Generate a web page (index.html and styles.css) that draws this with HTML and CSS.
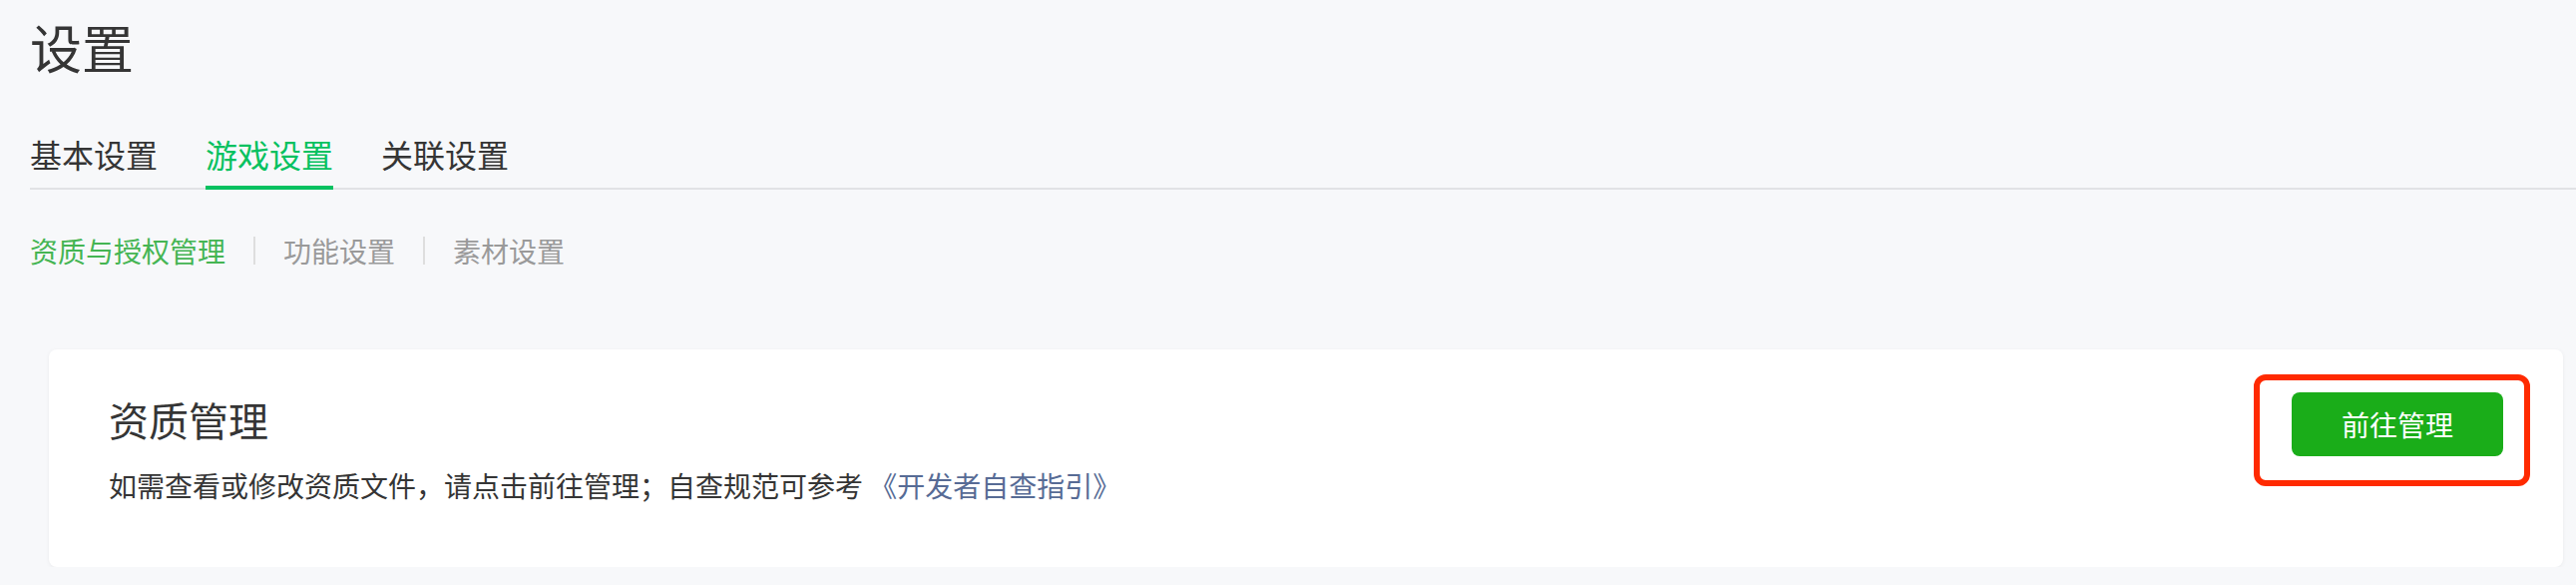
FILE: index.html
```html
<!DOCTYPE html>
<html lang="zh-CN">
<head>
	<meta charset="UTF-8" />
	<meta name="viewport" content="width=device-width, initial-scale=1.0" />
	<title>设置</title>
	<link rel="stylesheet" href="styles.css">
</head>
<body>
	<div class="page">
		<h1 class="page-title">设置</h1>

		<ul class="tabs">
			<li class="tab">基本设置</li>
			<li class="tab tab-on">游戏设置</li>
			<li class="tab">关联设置</li>
		</ul>

		<ul class="sub-nav">
			<li class="sub-item sub-on">资质与授权管理</li>
			<li class="sub-item">功能设置</li>
			<li class="sub-item">素材设置</li>
		</ul>

		<div class="card">
			<div class="card-info">
				<h2 class="card-title">资质管理</h2>
				<p class="card-desc">如需查看或修改资质文件，请点击前往管理；自查规范可参考 <a href="#" class="link">《开发者自查指引》</a></p>
			</div>
			<div class="action">
				<button type="button" class="bt-main">前往管理</button>
				<span class="mark"></span>
			</div>
		</div>
	</div>
</body>
</html>
```

FILE: styles.css
```css
html, body{
	margin: 0;
	background: #f7f8fa;
}
body{
	font-family: "Noto Sans CJK SC", "Noto Sans", sans-serif;
	color: #353535;
}
ul{
	margin: 0;
	padding: 0;
	list-style: none;
}
.page{
	padding: 21px 0 0 30px;
}
.page-title{
	margin: 0;
	font-size: 52px;
	line-height: 52px;
	font-weight: normal;
	color: #353535;
}
.tabs{
	display: flex;
	gap: 48px;
	margin-top: 65px;
	border-bottom: 2px solid #e1e2e5;
	font-size: 32px;
	line-height: 32px;
}
.tab{
	padding-bottom: 16px;
	border-bottom: 4px solid transparent;
	margin-bottom: -2px;
	color: #353535;
}
.tab-on{
	color: #07c160;
	border-bottom-color: #07c160;
}
.sub-nav{
	display: flex;
	margin-top: 47px;
	font-size: 28px;
	line-height: 28px;
}
.sub-item{
	padding-right: 28px;
	color: #9a9a9a;
}
.sub-item + .sub-item{
	padding-left: 28px;
	border-left: 2px solid #dedede;
}
.sub-on{
	color: #45b553;
}
.card{
	display: flex;
	align-items: flex-start;
	justify-content: space-between;
	margin: 85px 13px 0 19px;
	padding: 43px 60px 68px;
	background: #fff;
	border-radius: 8px;
	box-shadow: 0 1px 4px rgba(0, 0, 0, .06);
}
.card-info{
	padding-top: 7px;
}
.card-title{
	margin: 0;
	font-size: 40px;
	line-height: 40px;
	font-weight: normal;
	color: #353535;
}
.card-desc{
	margin: 32px 0 0;
	font-size: 28px;
	line-height: 28px;
	color: #353535;
}
.link{
	color: #576b95;
	text-decoration: none;
}
.action{
	position: relative;
}
.bt-main{
	display: block;
	width: 212px;
	height: 64px;
	padding: 0;
	border: 0;
	border-radius: 8px;
	background: #1aad19;
	color: #fff;
	font-family: inherit;
	font-size: 28px;
	cursor: pointer;
}
/* 标注框 */
.mark{
	position: absolute;
	top: -18px;
	left: -38px;
	width: 277px;
	height: 112px;
	box-sizing: border-box;
	border: 6px solid #ff2a00;
	border-radius: 12px;
	pointer-events: none;
}
```
